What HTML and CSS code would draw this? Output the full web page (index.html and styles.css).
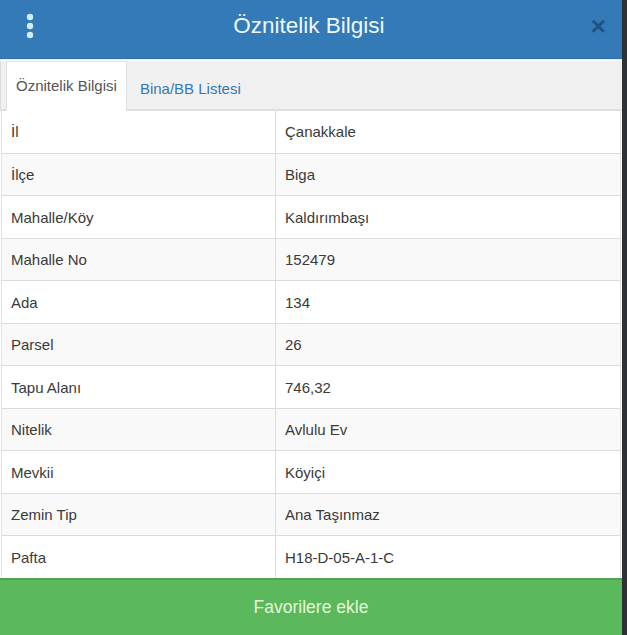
FILE: index.html
```html
<!DOCTYPE html>
<html lang="tr">
<head>
  <meta charset="UTF-8" />
  <meta name="viewport" content="width=device-width, initial-scale=1" />
  <title>Öznitelik Bilgisi</title>
  <link rel="stylesheet" href="styles.css">
</head>
<body>

  <div class="panel">
    <div class="panel-header">
      <button class="menu-button" aria-label="Menü">
        <svg width="10" height="26" viewBox="0 0 10 26">
          <circle cx="5" cy="4" r="3.2" />
          <circle cx="5" cy="13" r="3.2" />
          <circle cx="5" cy="22" r="3.2" />
        </svg>
      </button>
      <div class="panel-title">Öznitelik Bilgisi</div>
      <button class="close" aria-label="Kapat">&times;</button>
    </div>

    <div class="tabs">
      <div class="tab active">Öznitelik Bilgisi</div>
      <div class="tab">Bina/BB Listesi</div>
    </div>

    <table class="attr-table">
      <tbody>
        <tr><td>İl</td><td>Çanakkale</td></tr>
        <tr><td>İlçe</td><td>Biga</td></tr>
        <tr><td>Mahalle/Köy</td><td>Kaldırımbaşı</td></tr>
        <tr><td>Mahalle No</td><td>152479</td></tr>
        <tr><td>Ada</td><td>134</td></tr>
        <tr><td>Parsel</td><td>26</td></tr>
        <tr><td>Tapu Alanı</td><td>746,32</td></tr>
        <tr><td>Nitelik</td><td>Avlulu Ev</td></tr>
        <tr><td>Mevkii</td><td>Köyiçi</td></tr>
        <tr><td>Zemin Tip</td><td>Ana Taşınmaz</td></tr>
        <tr><td>Pafta</td><td>H18-D-05-A-1-C</td></tr>
      </tbody>
    </table>

    <button class="fav-button">Favorilere ekle</button>
  </div>

</body>
</html>
```

FILE: styles.css
```css
body {
  margin: 0;
  background: #2d3236;
  font-family: "Liberation Sans", Arial, sans-serif;
  font-size: 15px;
  color: #3a3a3a;
  height: 635px;
  overflow: hidden;
}
.panel {
  width: 622px;
  height: 635px;
  background: #fff;
  display: flex;
  flex-direction: column;
}
.panel-header {
  height: 59px;
  background: #337ab7;
  border-bottom: 1px solid #2e6fa7;
  box-shadow: 0 1px 0 #e4eef6;
  display: flex;
  align-items: center;
  padding: 0 16px 5px 25px;
  box-sizing: border-box;
}
.menu-button {
  background: none;
  border: none;
  padding: 0;
  width: 10px;
  height: 26px;
  cursor: pointer;
}
.menu-button svg {
  display: block;
  fill: #d4ecf7;
}
.panel-title {
  flex: 1;
  text-align: center;
  color: #eef8fc;
  font-size: 22.5px;
  padding-right: 8px;
}
.close {
  background: none;
  border: none;
  padding: 0;
  font-family: "Liberation Sans", Arial, sans-serif;
  font-size: 26px;
  font-weight: bold;
  line-height: 1;
  color: #1f527f;
  cursor: pointer;
  margin-top: -1px;
}
.tabs {
  height: 50px;
  margin-top: 2px;
  background: #f0f0f0;
  border-bottom: 2px solid #dedede;
  border-left: 1px solid #dcdcdc;
  display: flex;
  align-items: flex-end;
  padding-left: 5px;
  box-sizing: border-box;
}
.tab {
  height: 46px;
  line-height: 48px;
  padding: 0 10px;
  color: #337ab7;
  cursor: pointer;
  margin-bottom: -2px;
}
.tab.active {
  background: #fff;
  color: #555;
  border: 1px solid #e2e2e2;
  border-bottom: none;
  height: 49px;
  padding: 0 9px;
  margin-right: 3px;
}
.attr-table {
  width: 620px;
  margin-left: 1px;
  border-collapse: collapse;
  border-left: 1px solid #e4e4e4;
  border-right: 1px solid #e4e4e4;
}
.attr-table tr {
  height: 42.5px;
}
.attr-table tr:nth-child(even) {
  background: #f9f9f9;
}
.attr-table td {
  padding: 0 9px;
  border-bottom: 1px solid #dcdcdc;
  vertical-align: middle;
}
.attr-table td:first-child {
  width: 255px;
  border-right: 1px solid #dcdcdc;
}
.attr-table tr:last-child td {
  border-bottom: none;
}
.fav-button {
  margin-top: auto;
  height: 57px;
  background: #5cb85c;
  border: none;
  border-top: 2px solid #4ea44e;
  color: #e4f7dc;
  font-family: "Liberation Sans", Arial, sans-serif;
  font-size: 17.5px;
  cursor: pointer;
  padding: 0;
}
```
